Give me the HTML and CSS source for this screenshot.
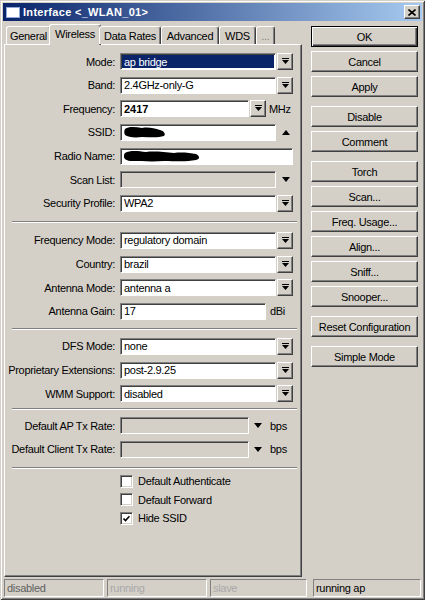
FILE: index.html
```html
<!DOCTYPE html>
<html>
<head>
<meta charset="utf-8">
<link rel="stylesheet" href="styles.css">
</head>
<body>
<div class="window">
  <div class="titlebar">
    <span class="ticon"></span>
    <span class="ttext">Interface &lt;_WLAN_01&gt;</span>
    <span class="tclose"><svg width="8" height="7" viewBox="0 0 8 7"><path d="M0.5 0.5L7.5 6.5M7.5 0.5L0.5 6.5" stroke="#000" stroke-width="1.6"/></svg></span>
  </div>
  <div class="main">
    <div class="left">
      <div class="tabs">
        <div class="tab t-general">General</div>
        <div class="tab sel t-wireless">Wireless</div>
        <div class="tab t-rates">Data Rates</div>
        <div class="tab t-adv">Advanced</div>
        <div class="tab t-wds">WDS</div>
        <div class="tab t-more">...</div>
      </div>
      <div class="panel">
        <div class="rows">
          <div class="row"><span class="lbl">Mode:</span><span class="field w156 selected">ap bridge</span><span class="dd"><svg width="7" height="7" viewBox="0 0 7 7"><rect x="0" y="0" width="7" height="1"/><path d="M0 2h7l-3.5 4z"/></svg></span></div>
          <div class="row"><span class="lbl">Band:</span><span class="field w156">2.4GHz-only-G</span><span class="dd"><svg width="7" height="7" viewBox="0 0 7 7"><rect x="0" y="0" width="7" height="1"/><path d="M0 2h7l-3.5 4z"/></svg></span></div>
          <div class="row"><span class="lbl">Frequency:</span><span class="field w129 bold">2417</span><span class="dd"><svg width="7" height="7" viewBox="0 0 7 7"><rect x="0" y="0" width="7" height="1"/><path d="M0 2h7l-3.5 4z"/></svg></span><span class="unit u-mhz">MHz</span></div>
          <div class="row"><span class="lbl">SSID:</span><span class="field w156"><svg class="blob" width="42" height="12" viewBox="0 0 42 12"><path d="M1 3C5 0 12 1 18 2C24 1 30 2 36 4C40 5 42 8 40 10C34 12 26 11 18 11C10 12 4 11 1 9C0 7 0 5 1 3Z"/></svg></span><span class="arr"><svg width="8" height="5" viewBox="0 0 8 5"><path d="M0 5h8l-4-5z"/></svg></span></div>
          <div class="row"><span class="lbl">Radio Name:</span><span class="field w173"><svg class="blob" width="76" height="12" viewBox="0 0 76 12"><path d="M1 3C6 0 14 1 22 2C30 1 40 2 50 3C58 2 66 3 72 4C76 6 76 9 72 10C62 12 52 11 40 11C28 12 16 11 8 11C3 11 0 9 0 7C0 5 0 4 1 3Z"/></svg></span></div>
          <div class="row"><span class="lbl">Scan List:</span><span class="field w156 disabled"></span><span class="arr"><svg width="8" height="5" viewBox="0 0 8 5"><path d="M0 0h8l-4 5z"/></svg></span></div>
          <div class="row"><span class="lbl">Security Profile:</span><span class="field w156">WPA2</span><span class="dd"><svg width="7" height="7" viewBox="0 0 7 7"><rect x="0" y="0" width="7" height="1"/><path d="M0 2h7l-3.5 4z"/></svg></span></div>
        </div>
        <div class="sep s1"></div>
        <div class="rows">
          <div class="row"><span class="lbl">Frequency Mode:</span><span class="field w156">regulatory domain</span><span class="dd"><svg width="7" height="7" viewBox="0 0 7 7"><rect x="0" y="0" width="7" height="1"/><path d="M0 2h7l-3.5 4z"/></svg></span></div>
          <div class="row"><span class="lbl">Country:</span><span class="field w156">brazil</span><span class="dd"><svg width="7" height="7" viewBox="0 0 7 7"><rect x="0" y="0" width="7" height="1"/><path d="M0 2h7l-3.5 4z"/></svg></span></div>
          <div class="row"><span class="lbl">Antenna Mode:</span><span class="field w156">antenna a</span><span class="dd"><svg width="7" height="7" viewBox="0 0 7 7"><rect x="0" y="0" width="7" height="1"/><path d="M0 2h7l-3.5 4z"/></svg></span></div>
          <div class="row"><span class="lbl">Antenna Gain:</span><span class="field w146">17</span><span class="unit u-dbi">dBi</span></div>
        </div>
        <div class="sep s2"></div>
        <div class="rows">
          <div class="row"><span class="lbl">DFS Mode:</span><span class="field w156">none</span><span class="dd"><svg width="7" height="7" viewBox="0 0 7 7"><rect x="0" y="0" width="7" height="1"/><path d="M0 2h7l-3.5 4z"/></svg></span></div>
          <div class="row"><span class="lbl">Proprietary Extensions:</span><span class="field w156">post-2.9.25</span><span class="dd"><svg width="7" height="7" viewBox="0 0 7 7"><rect x="0" y="0" width="7" height="1"/><path d="M0 2h7l-3.5 4z"/></svg></span></div>
          <div class="row"><span class="lbl">WMM Support:</span><span class="field w156">disabled</span><span class="dd"><svg width="7" height="7" viewBox="0 0 7 7"><rect x="0" y="0" width="7" height="1"/><path d="M0 2h7l-3.5 4z"/></svg></span></div>
        </div>
        <div class="sep s3"></div>
        <div class="rows">
          <div class="row"><span class="lbl">Default AP Tx Rate:</span><span class="field w129 disabled"></span><span class="arr a16"><svg width="8" height="5" viewBox="0 0 8 5"><path d="M0 0h8l-4 5z"/></svg></span><span class="unit u-bps">bps</span></div>
          <div class="row"><span class="lbl">Default Client Tx Rate:</span><span class="field w129 disabled"></span><span class="arr a16"><svg width="8" height="5" viewBox="0 0 8 5"><path d="M0 0h8l-4 5z"/></svg></span><span class="unit u-bps">bps</span></div>
        </div>
        <div class="sep s4"></div>
        <div class="checks">
          <div class="check"><span class="box"></span><span>Default Authenticate</span></div>
          <div class="check"><span class="box"></span><span>Default Forward</span></div>
          <div class="check"><span class="box"><svg width="7" height="7" viewBox="0 0 7 7"><path d="M0.5 3.5L2.5 5.5L6.5 1.2" fill="none" stroke="#000" stroke-width="1.6"/></svg></span><span>Hide SSID</span></div>
        </div>
      </div>
    </div>
    <div class="btns">
      <div class="grp">
        <div class="btn default">OK</div>
        <div class="btn">Cancel</div>
        <div class="btn">Apply</div>
      </div>
      <div class="grp">
        <div class="btn">Disable</div>
        <div class="btn">Comment</div>
      </div>
      <div class="grp">
        <div class="btn">Torch</div>
        <div class="btn">Scan...</div>
        <div class="btn">Freq. Usage...</div>
        <div class="btn">Align...</div>
        <div class="btn">Sniff...</div>
        <div class="btn">Snooper...</div>
      </div>
      <div class="grp">
        <div class="btn">Reset Configuration</div>
      </div>
      <div class="grp">
        <div class="btn">Simple Mode</div>
      </div>
    </div>
  </div>
  <div class="status">
    <div class="sp sp1 dim1">disabled</div>
    <div class="sp sp2 dim2">running</div>
    <div class="sp sp3 dim2">slave</div>
    <div class="sp sp4">running ap</div>
  </div>
</div>
</body>
</html>
```
FILE: styles.css
```css
* { box-sizing: border-box; }
html, body { margin: 0; padding: 0; }
body {
  width: 425px;
  height: 600px;
  overflow: hidden;
  background: #d4d0c8;
  font-family: "Liberation Sans", Arial, sans-serif;
  font-size: 11px;
  letter-spacing: -0.3px;
  color: #000;
}
.window {
  width: 425px;
  height: 600px;
  padding: 3px;
  display: flex;
  flex-direction: column;
  background: #d4d0c8;
  box-shadow: inset 1px 1px #d4d0c8, inset -1px -1px #404040, inset 2px 2px #fff, inset -2px -2px #808080;
}
.titlebar {
  flex: none;
  height: 18px;
  display: flex;
  align-items: center;
  padding: 0 2px 0 3px;
  background: linear-gradient(to right, #0a246a, #a6caf0);
  color: #fff;
  font-weight: bold;
  font-size: 11px;
  letter-spacing: 0.3px;
}
.ticon {
  width: 14px;
  height: 11px;
  background: #fff;
  border: 1px solid #8fa8d8;
}
.ttext { margin-left: 3px; }
.tclose {
  margin-left: auto;
  width: 16px;
  height: 14px;
  background: #d4d0c8;
  border: 1px solid;
  border-color: #fff #404040 #404040 #fff;
  box-shadow: inset -1px -1px #808080;
  display: flex;
  align-items: center;
  justify-content: center;
}
.main {
  flex: 1;
  min-height: 0;
  display: flex;
  margin-top: 1px;
}
.left {
  width: 298px;
  margin-left: 1px;
  display: flex;
  flex-direction: column;
}
.tabs {
  height: 22px;
  flex: none;
  display: flex;
  align-items: flex-end;
  padding-left: 2px;
  position: relative;
  z-index: 1;
}
.tab {
  height: 18px;
  border: 1px solid;
  border-color: #fff #404040 transparent #fff;
  border-bottom: 0;
  border-radius: 3px 3px 0 0;
  box-shadow: inset -1px 0 #808080;
  background: #d4d0c8;
  display: flex;
  align-items: center;
  justify-content: center;
  white-space: nowrap;
}
.tab.sel {
  height: 21px;
  margin: 0 -2px -1px;
  padding-bottom: 2px;
}
.t-general { width: 45px; }
.t-wireless { width: 52px; }
.t-rates { width: 62px; }
.t-adv { width: 58px; }
.t-wds { width: 37px; }
.t-more { width: 19px; color: #808080; }
.panel {
  flex: 1;
  border: 1px solid;
  border-color: #fff #404040 #404040 #fff;
  box-shadow: inset -1px -1px #808080;
  padding: 8px 0 0 1px;
}
.rows {
  display: flex;
  flex-direction: column;
  gap: 6.67px;
}
.row {
  height: 17px;
  display: flex;
  align-items: center;
}
.lbl {
  width: 114px;
  padding-right: 5px;
  text-align: right;
  white-space: nowrap;
}
.field {
  height: 17px;
  background: #fff;
  border: 1px solid;
  border-color: #808080 #fff #fff #808080;
  box-shadow: inset 1px 1px #404040;
  padding: 0 3px;
  display: flex;
  align-items: center;
  white-space: nowrap;
  overflow: hidden;
}
.field.selected { background: #0a246a; color: #fff; box-shadow: inset 1px 1px #404040, inset -1px -1px #fff; }
.field.disabled { background: #d4d0c8; }
.field.bold { font-weight: bold; letter-spacing: 0; }
.w129 { width: 129px; }
.w146 { width: 146px; }
.w156 { width: 156px; }
.w173 { width: 173px; }
.blob { fill: #000; flex: none; }
.dd {
  width: 16px;
  height: 17px;
  margin-left: 1px;
  border: 1px solid;
  border-color: #fff #404040 #404040 #fff;
  box-shadow: inset -1px -1px #808080;
  display: flex;
  align-items: center;
  justify-content: center;
}
.arr {
  width: 17px;
  height: 17px;
  margin-left: 1px;
  display: flex;
  align-items: center;
  justify-content: center;
}
.arr.a16 { width: 16px; }
.unit { white-space: nowrap; }
.u-mhz { margin-left: 3px; }
.u-dbi { margin-left: 4px; }
.u-bps { margin-left: 4px; }
.sep {
  height: 2px;
  margin-left: 6px;
  margin-right: 4px;
  border-top: 1px solid #808080;
  border-bottom: 1px solid #fff;
}
.s1 { margin-top: 9px; margin-bottom: 9px; }
.s2 { margin-top: 8px; margin-bottom: 8px; }
.s3 { margin-top: 6px; margin-bottom: 7px; }
.s4 { margin-top: 9px; margin-bottom: 6px; }
.checks {
  margin-left: 114px;
  display: flex;
  flex-direction: column;
  gap: 5.5px;
}
.check {
  height: 13px;
  display: flex;
  align-items: center;
  gap: 5px;
}
.box {
  width: 13px;
  height: 13px;
  background: #fff;
  border: 1px solid;
  border-color: #808080 #fff #fff #808080;
  box-shadow: inset 1px 1px #404040, inset -1px -1px #d4d0c8;
  display: flex;
  align-items: center;
  justify-content: center;
}
.btns {
  width: 107px;
  margin-left: 9px;
  padding-top: 4px;
  display: flex;
  flex-direction: column;
  gap: 9px;
}
.grp {
  display: flex;
  flex-direction: column;
  gap: 4px;
}
.btn {
  height: 21px;
  border: 1px solid;
  border-color: #fff #404040 #404040 #fff;
  box-shadow: inset -1px -1px #808080;
  display: flex;
  align-items: center;
  justify-content: center;
  white-space: nowrap;
}
.btn.default {
  border-color: #000;
  box-shadow: inset 1px 1px #fff, inset -1px -1px #404040, inset -2px -2px #808080;
}
.status {
  flex: none;
  height: 18px;
  margin-top: 2px;
  display: flex;
}
.sp {
  height: 18px;
  border: 1px solid;
  border-color: #808080 #fff #fff #808080;
  padding-left: 2px;
  display: flex;
  align-items: center;
  white-space: nowrap;
}
.sp1 { width: 100px; margin-left: 1px; }
.sp2 { width: 100px; margin-left: 3px; }
.sp3 { width: 97px; margin-left: 3px; }
.sp4 { width: 108px; margin-left: 6px; }
.dim1 { color: #606060; }
.dim2 { color: #a8a8a8; }
```
